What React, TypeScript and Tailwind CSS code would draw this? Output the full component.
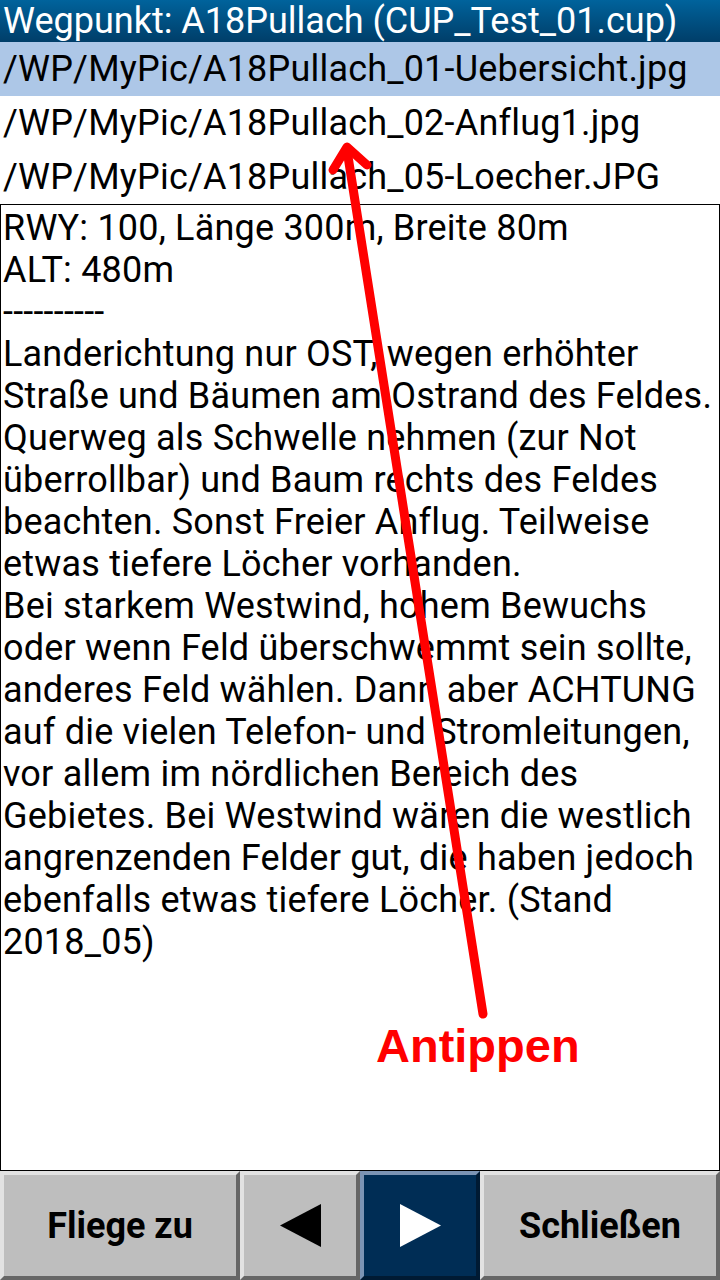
const files = [
  "/WP/MyPic/A18Pullach_01-Uebersicht.jpg",
  "/WP/MyPic/A18Pullach_02-Anflug1.jpg",
  "/WP/MyPic/A18Pullach_05-Loecher.JPG",
];

const lines = [
  "RWY: 100, Länge 300m, Breite 80m",
  "ALT: 480m",
  "----------",
  "Landerichtung nur OST, wegen erhöhter",
  "Straße und Bäumen am Ostrand des Feldes.",
  "Querweg als Schwelle nehmen (zur Not",
  "überrollbar) und Baum rechts des Feldes",
  "beachten. Sonst Freier Anflug. Teilweise",
  "etwas tiefere Löcher vorhanden.",
  "Bei starkem Westwind, hohem Bewuchs",
  "oder wenn Feld überschwemmt sein sollte,",
  "anderes Feld wählen. Dann aber ACHTUNG",
  "auf die vielen Telefon- und Stromleitungen,",
  "vor allem im nördlichen Bereich des",
  "Gebietes. Bei Westwind wären die westlich",
  "angrenzenden Felder gut, die haben jedoch",
  "ebenfalls etwas tiefere Löcher. (Stand",
  "2018_05)",
];

const grayBtn =
  "flex items-center justify-center bg-[#bebebe] border-4 border-t-[#e2e2e2] border-l-[#e2e2e2] border-b-[#666666] border-r-[#666666]";

export default function App() {
  return (
    <div className="relative w-[720px] h-[1280px] flex flex-col bg-white overflow-hidden font-['Roboto',sans-serif] text-black">
      {/* Titelzeile */}
      <div className="h-[42px] shrink-0 flex items-center pl-[3px] bg-gradient-to-b from-[#00639c] to-[#003e69] text-white text-[36px] leading-none whitespace-nowrap">
        Wegpunkt: A18Pullach (CUP_Test_01.cup)
      </div>

      {/* Bilderliste */}
      {files.map((f, i) => (
        <div
          key={f}
          className={`h-[54px] shrink-0 flex items-center pl-[3px] text-[36px] leading-none tracking-[0.2px] whitespace-nowrap ${
            i === 0 ? "bg-[#adc7e7]" : "bg-white"
          }`}
        >
          {f}
        </div>
      ))}

      {/* Beschreibung */}
      <div className="flex-1 border border-black pl-[2px] pt-[2px] text-[36px] leading-[42px] tracking-[0.2px]">
        {lines.map((l, i) => (
          <div key={i} className="whitespace-nowrap">
            {l}
          </div>
        ))}
      </div>

      {/* Buttons */}
      <div className="h-[109px] shrink-0 flex">
        <div className={`w-[240px] ${grayBtn} text-[36px] font-bold`}>Fliege zu</div>
        <div className={`w-[120px] ${grayBtn}`}>
          <svg width="41" height="43" viewBox="0 0 41 43">
            <polygon points="0,21.5 41,0 41,43" fill="#000" />
          </svg>
        </div>
        <div className="w-[120px] flex items-center justify-center bg-[#002d55] border-4 border-t-[#7c94b4] border-l-[#7c94b4] border-b-[#001a33] border-r-[#001a33]">
          <svg width="41" height="43" viewBox="0 0 41 43">
            <polygon points="0,0 41,21.5 0,43" fill="#fff" />
          </svg>
        </div>
        <div className={`w-[240px] ${grayBtn} text-[36px] font-bold`}>Schließen</div>
      </div>

      {/* Hinweis-Pfeil */}
      <svg className="absolute inset-0 pointer-events-none" width="720" height="1280" viewBox="0 0 720 1280">
        <g stroke="#ff0000" strokeWidth="9" strokeLinecap="round" strokeLinejoin="round" fill="none">
          <line x1="483" y1="1014" x2="347" y2="150" />
          <polyline points="333,170 347,147 367,165" />
        </g>
        <text
          x="376"
          y="1062"
          fill="#ff0000"
          fontFamily="'Liberation Sans', Arial, sans-serif"
          fontWeight="bold"
          fontSize="47"
        >
          Antippen
        </text>
      </svg>
    </div>
  );
}
